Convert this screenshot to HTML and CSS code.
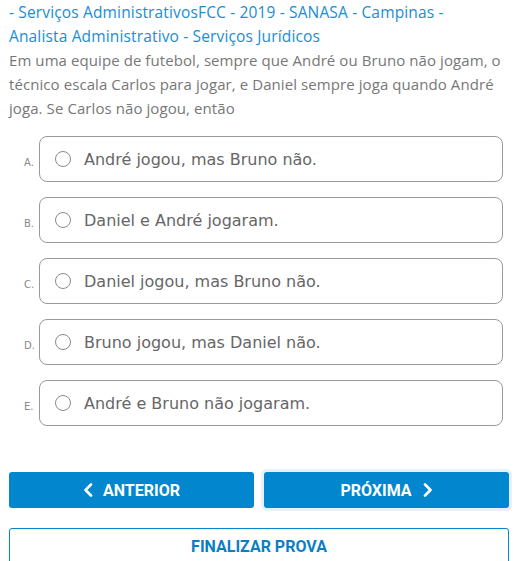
FILE: index.html
```html
<!DOCTYPE html>
<html lang="pt-BR">
<head>
<meta charset="utf-8">
<link rel="stylesheet" href="styles.css">
</head>
<body>
<div class="page">
  <div class="question">
    <a class="meta" href="#">- Serviços AdministrativosFCC - 2019 - SANASA - Campinas - Analista Administrativo - Serviços Jurídicos</a>
    <p class="stem">Em uma equipe de futebol, sempre que André ou Bruno não jogam, o técnico escala Carlos para jogar, e Daniel sempre joga quando André joga. Se Carlos não jogou, então</p>
  </div>
  <ul class="options">
    <li class="option"><span class="letter">A.</span><label class="box"><span class="radio"></span><span class="text">André jogou, mas Bruno não.</span></label></li>
    <li class="option"><span class="letter">B.</span><label class="box"><span class="radio"></span><span class="text">Daniel e André jogaram.</span></label></li>
    <li class="option"><span class="letter">C.</span><label class="box"><span class="radio"></span><span class="text">Daniel jogou, mas Bruno não.</span></label></li>
    <li class="option"><span class="letter">D.</span><label class="box"><span class="radio"></span><span class="text">Bruno jogou, mas Daniel não.</span></label></li>
    <li class="option"><span class="letter">E.</span><label class="box"><span class="radio"></span><span class="text">André e Bruno não jogaram.</span></label></li>
  </ul>
  <div class="nav">
    <button class="btn btn-primary"><svg class="chev" width="10" height="14" viewBox="0 0 10 14"><path d="M8 1.5 L2.5 7 L8 12.5" fill="none" stroke="#fff" stroke-width="2.6" stroke-linecap="round" stroke-linejoin="round"/></svg>ANTERIOR</button>
    <button class="btn btn-primary focused">PRÓXIMA<svg class="chev chev-r" width="10" height="14" viewBox="0 0 10 14"><path d="M2 1.5 L7.5 7 L2 12.5" fill="none" stroke="#fff" stroke-width="2.6" stroke-linecap="round" stroke-linejoin="round"/></svg></button>
  </div>
  <button class="btn btn-outline">FINALIZAR PROVA</button>
</div>
</body>
</html>
```

FILE: styles.css
```css
* { box-sizing: border-box; }
html, body { margin: 0; padding: 0; background: #fff; }
body { overflow: hidden; }
.page {
  width: 518px;
  padding: 0 9px 0 9px;
}
.question {
  font-family: "Open Sans", sans-serif;
  font-size: 15px;
  line-height: 24px;
}
.meta {
  color: #1a8dd3;
  text-decoration: none;
  display: block;
  max-width: 470px;
  font-size: 15.5px;
  letter-spacing: 0.15px;
}
.stem {
  margin: 0;
  color: #777;
  letter-spacing: 0.08px;
}
.options {
  list-style: none;
  margin: 16px 0 0 0;
  padding: 0;
  display: flex;
  flex-direction: column;
  gap: 15px;
}
.option {
  display: flex;
  align-items: center;
}
.letter {
  width: 30px;
  padding-left: 15px;
  padding-top: 6px;
  font-family: "DejaVu Sans", sans-serif;
  font-size: 10px;
  color: #888;
}
.box {
  width: 464px;
  height: 46px;
  border: 1px solid #9a9a9a;
  border-radius: 8px;
  display: flex;
  align-items: center;
  padding-left: 15px;
}
.radio {
  width: 16px;
  height: 16px;
  border: 1.5px solid #8a8a8a;
  border-radius: 50%;
  flex: none;
}
.text {
  margin-left: 13px;
  font-family: "DejaVu Sans", sans-serif;
  font-size: 16px;
  color: #666;
}
.nav {
  margin-top: 46px;
  display: flex;
  gap: 10px;
  width: 500px;
}
.btn {
  font-family: Roboto, sans-serif;
  font-weight: 700;
  font-size: 16px;
  height: 36px;
  border-radius: 3px;
  display: flex;
  align-items: center;
  justify-content: center;
  cursor: pointer;
}
.btn-primary {
  flex: 1;
  background: #0286cd;
  color: #fff;
  border: none;
}
.focused {
  box-shadow: 0 0 0 3px #e8f0fb;
}
.chev { margin-right: 10px; }
.chev-r { margin-right: 0; margin-left: 11px; }
.btn-outline {
  margin-top: 20px;
  width: 500px;
  background: #fff;
  color: #0a7fc4;
  border: 1px solid #0286cd;
  height: 40px;
  padding-bottom: 4px;
}
```
